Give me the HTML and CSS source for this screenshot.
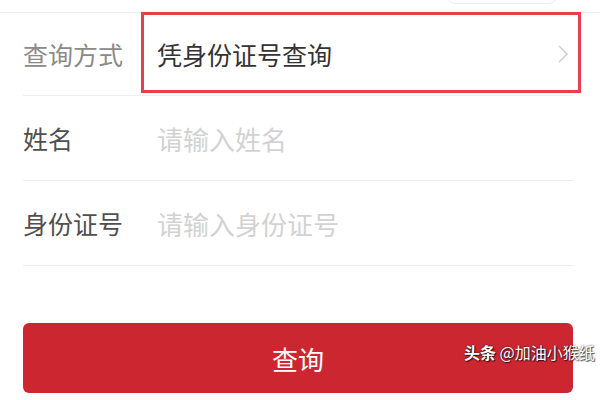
FILE: index.html
```html
<!DOCTYPE html>
<html>
<head>
<meta http-equiv="Content-Type" content="text/html; charset=utf-8"/>
<title>查询</title>
<link rel="stylesheet" href="styles.css">
</head>
<body>
<div class="page">
  <div class="top">
    <div class="pill"></div>
  </div>

  <div class="form">
    <div class="row row-first">
      <span class="label label-light">查询方式</span>
      <span class="value">凭身份证号查询</span>
      <svg class="chevron" width="12" height="20" viewBox="0 0 12 20">
        <polyline points="2,2 10,10 2,18" fill="none" stroke="#cfcfcf" stroke-width="1.5"/>
      </svg>
    </div>
    <div class="row">
      <span class="label">姓名</span>
      <span class="placeholder">请输入姓名</span>
    </div>
    <div class="row">
      <span class="label">身份证号</span>
      <span class="placeholder">请输入身份证号</span>
    </div>

    <div class="btn">查询</div>
  </div>

  <!-- annotation box drawn over the first row -->
  <div class="mark"></div>

  <div class="watermark"><b>头条</b> @加油小猴纸</div>
</div>
</body>
</html>
```

FILE: styles.css
```css
body {
  margin: 0;
  background-color: white;
  font-family: "Noto Sans CJK SC", "Noto Sans", sans-serif;
}

.page {
  position: relative;
  width: 600px;
  height: 400px;
  overflow: hidden;
}

.top {
  height: 12px;
  border-bottom: 1px solid #eeeeee;
  display: flex;
  justify-content: flex-end;
  padding-right: 42px;
}

.pill {
  width: 110px;
  height: 20px;
  margin-top: -18px;
  border: 1px solid #ececec;
  border-radius: 10px;
}

.form {
  padding: 0 27px 0 23px;
}

.row {
  height: 84px;
  border-bottom: 1px solid #eeeeee;
  display: flex;
  align-items: center;
  font-size: 25px;
}

.row-first {
  height: 82px;
}

.label {
  width: 134px;
  color: #4f4f4f;
}

.label-light {
  color: #8a8a8a;
}

.value {
  flex: 1;
  color: #333333;
}

.placeholder {
  color: #d2d2d2;
  font-size: 26px;
}

.chevron {
  margin-right: 4px;
}

.btn {
  margin-top: 57px;
  height: 70px;
  border-radius: 6px;
  background-color: #cc2731;
  color: white;
  font-size: 26px;
  display: flex;
  align-items: center;
  justify-content: center;
}

.mark {
  position: absolute;
  left: 141px;
  top: 12px;
  width: 440px;
  height: 81px;
  box-sizing: border-box;
  border: 3px solid #e8404b;
}

.watermark {
  position: absolute;
  left: 464px;
  top: 340px;
  font-size: 16px;
  color: white;
  text-shadow: 0 0 2px rgba(0, 0, 0, 0.8), 1px 1px 1px rgba(0, 0, 0, 0.6);
  white-space: nowrap;
}
```
